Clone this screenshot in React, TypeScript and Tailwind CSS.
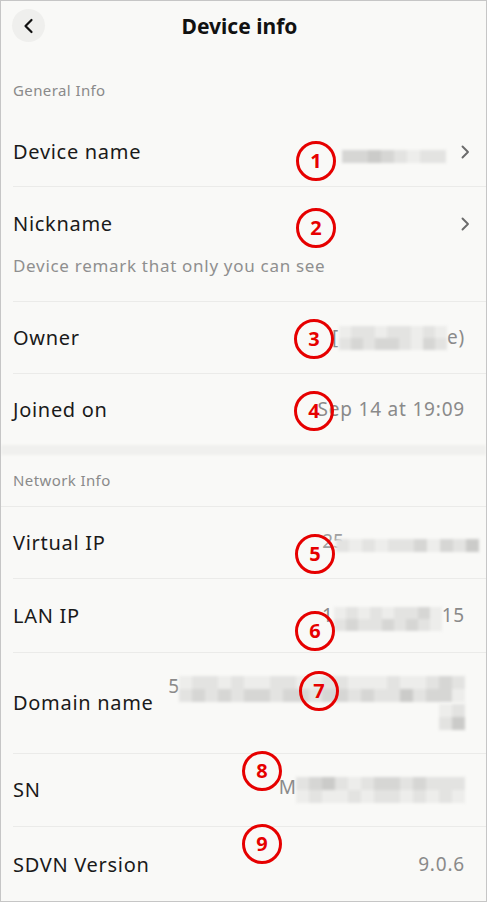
import React from "react";

type Shade = string;

// pixelated blur used for the redacted values
function Mosaic({ rows, cell = 13, className = "" }: { rows: Shade[][]; cell?: number; className?: string }) {
  return (
    <div className={`flex flex-col blur-[1.5px] ${className}`}>
      {rows.map((r, i) => (
        <div key={i} className="flex">
          {r.map((c, j) => (
            <div key={j} style={{ width: cell, height: cell, background: c }} />
          ))}
        </div>
      ))}
    </div>
  );
}

function Chevron() {
  return (
    <svg width="12" height="16" viewBox="0 0 12 16" fill="none" className="-mr-[6px] shrink-0">
      <path d="M3.5 2.5 L9 8 L3.5 13.5" stroke="#6b6b6b" strokeWidth="1.9" strokeLinecap="round" strokeLinejoin="round" />
    </svg>
  );
}

function Row({ label, children, className = "h-[73px]", last = false }: { label: string; children?: React.ReactNode; className?: string; last?: boolean }) {
  return (
    <div className={`ml-3 flex items-center justify-between pr-[21px] ${last ? "" : "border-b border-[#ebebe9]"} ${className}`}>
      <span className="text-[20px] tracking-[0.7px] text-[#1a1a1a]">{label}</span>
      {children}
    </div>
  );
}

function Mark({ n, x, y }: { n: number; x: number; y: number }) {
  return (
    <div
      className="absolute flex h-[40px] w-[40px] items-center justify-center rounded-full border-[3px] border-[#e60000] text-[20px] font-bold text-[#e60000]"
      style={{ left: x - 20, top: y - 20 }}
    >
      {n}
    </div>
  );
}

const L = "#e3e3e1";
const M = "#d6d6d4";
const D = "#cbcbc9";
const W = "#ededeb";

export default function App() {
  return (
    <div
      className="relative h-[902px] w-[487px] overflow-hidden border border-[#c6c6c6] bg-[#f9f9f7]"
      style={{ fontFamily: '"Noto Sans", "Open Sans", sans-serif' }}
    >
      {/* header */}
      <div className="relative flex h-[52px] items-center justify-center pr-[8px]">
        <button className="absolute left-[11px] top-[8px] flex h-[33px] w-[33px] items-center justify-center rounded-full bg-[#efefed]">
          <svg width="14" height="16" viewBox="0 0 14 16" fill="none">
            <path d="M9.5 2 L3.5 8 L9.5 14" stroke="#111" strokeWidth="2.2" strokeLinecap="round" strokeLinejoin="round" />
          </svg>
        </button>
        <h1 className="text-[21px] font-bold text-[#111]">Device info</h1>
      </div>

      {/* general */}
      <div className="flex h-[65px] items-center px-3 pt-[9px] text-[15px] tracking-[0.4px] text-[#8a8a8a]">General Info</div>

      <Row label="Device name" className="h-[69px]">
        <div className="flex items-center gap-[13px]">
          <Mosaic rows={[[M, M, D, M, L, W, L, L]]} cell={13} className="mt-[8px]" />
          <Chevron />
        </div>
      </Row>

      <div className="ml-3 flex h-[115px] flex-col border-b border-[#ebebe9] pr-[21px]">
        <div className="flex items-center justify-between pt-[22px]">
          <span className="text-[20px] tracking-[0.7px] text-[#1a1a1a]">Nickname</span>
          <Chevron />
        </div>
        <span className="mt-[14px] text-[17px] tracking-[0.7px] text-[#8f8f8f]">Device remark that only you can see</span>
      </div>

      <Row label="Owner" className="h-[72px]">
        <div className="flex items-center text-[19px] tracking-[0.8px] text-[#8a8a8a]">
          <span>[</span>
          <Mosaic rows={[[W, L, L, W, L, L, W, L, W], [L, M, L, M, M, L, W, M, L]]} cell={12} />
          <span>e)</span>
        </div>
      </Row>

      <Row label="Joined on" className="h-[71px]" last>
        <span className="text-[19px] tracking-[0.8px] text-[#8a8a8a]">Sep 14 at 19:09</span>
      </Row>

      <div className="h-[10px] bg-[#f0f0ee] blur-[1px]" />

      {/* network */}
      <div className="flex h-[52px] items-center border-b border-[#ebebe9] px-3 text-[15px] tracking-[0.4px] text-[#8a8a8a]">Network Info</div>

      <Row label="Virtual IP" className="h-[72px]">
        <div className="-mr-[14px] flex items-center text-[19px] text-[#a0a0a0]">
          <span className="-mr-[8px] -mt-[2px]">25</span>
          <Mosaic rows={[[L, W, L, W, L, L, M, W, M, L, D]]} cell={13} className="relative mt-[6px]" />
        </div>
      </Row>

      <Row label="LAN IP" className="h-[74px]">
        <div className="flex items-center text-[19px] tracking-[0.8px] text-[#8a8a8a]">
          <span>1</span>
          <Mosaic rows={[[W, L, W, L, W, L, L, M, W], [L, M, L, L, M, L, M, L, W]]} cell={12} className="mt-[6px]" />
          <span>15</span>
        </div>
      </Row>

      <div className="ml-3 flex h-[101px] items-center justify-between border-b border-[#ebebe9] pr-[21px]">
        <span className="text-[20px] tracking-[0.7px] text-[#1a1a1a]">Domain name</span>
        <div className="flex flex-col items-end">
          <div className="flex items-center text-[19px] text-[#8a8a8a]">
            <span className="-mt-[6px]">5</span>
            <Mosaic
              rows={[
                [W, L, L, W, L, W, W, L, L, W, W, L, L, W, W, W, L, W, W, L, M, L],
                [L, M, L, M, L, M, M, L, M, M, L, M, M, L, M, L, L, D, L, M, M, W],
              ]}
              cell={13}
            />
          </div>
          <Mosaic rows={[[W, L], [L, D]]} cell={13} className="mt-[2px]" />
        </div>
      </div>

      <Row label="SN" className="h-[73px]">
        <div className="flex items-center text-[19px] text-[#8a8a8a]">
          <span className="-mt-[6px]">M</span>
          <Mosaic
            rows={[
              [L, M, D, L, W, L, M, M, L, M, L, L, L],
              [W, L, W, W, L, W, L, L, W, L, W, L, W],
            ]}
            cell={13}
          />
        </div>
      </Row>

      <Row label="SDVN Version" className="h-[75px]" last>
        <span className="text-[19px] tracking-[0.8px] text-[#8a8a8a]">9.0.6</span>
      </Row>

      {/* annotations */}
      <Mark n={1} x={315} y={160} />
      <Mark n={2} x={315} y={227} />
      <Mark n={3} x={313} y={338} />
      <Mark n={4} x={313} y={410} />
      <Mark n={5} x={314} y={553} />
      <Mark n={6} x={314} y={630} />
      <Mark n={7} x={318} y={690} />
      <Mark n={8} x={261} y={770} />
      <Mark n={9} x={261} y={843} />
    </div>
  );
}
